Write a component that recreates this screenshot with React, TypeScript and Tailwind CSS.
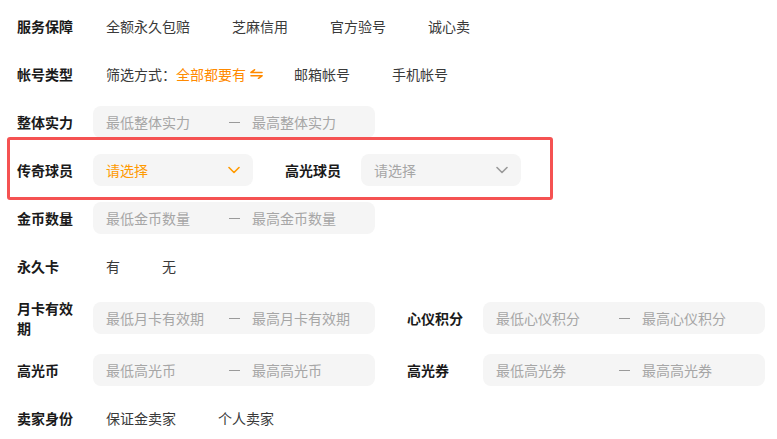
import React from "react";

const Label = ({ children }: { children: React.ReactNode }) => (
  <div className="w-[76px] shrink-0 pr-[12px] text-[14px] leading-[20px] font-bold text-[#1a1a1a]">{children}</div>
);

const Options = ({ items }: { items: string[] }) => (
  <div className="flex items-center gap-[42px] pl-[13px] text-[14px] leading-[20px] text-[#3a3a3a]">
    {items.map((t) => (
      <span key={t}>{t}</span>
    ))}
  </div>
);

const Range = ({ a, b }: { a: string; b: string }) => (
  <div className="w-[282px] h-[32px] rounded-[8px] bg-[#f5f5f5] flex items-center text-[14px] leading-[20px] text-[#a6a6a6]">
    <span className="w-[136px] pl-[13px] shrink-0">{a}</span>
    <span className="w-[11px] h-[1px] bg-[#9a9a9a] shrink-0"></span>
    <span className="pl-[12px]">{b}</span>
  </div>
);

const Chevron = ({ color }: { color: string }) => (
  <svg width="12" height="8" viewBox="0 0 12 8" fill="none">
    <polyline points="1,1.5 6,6.5 11,1.5" stroke={color} strokeWidth="1.6" strokeLinecap="round" strokeLinejoin="round" />
  </svg>
);

const Select = ({ active }: { active?: boolean }) => (
  <div className="w-[160px] h-[32px] rounded-[8px] bg-[#f5f5f5] flex items-center justify-between pl-[13px] pr-[13px] text-[14px] leading-[20px]">
    <span className={active ? "text-[#ff9a00]" : "text-[#a6a6a6]"}>请选择</span>
    <Chevron color={active ? "#ff9a00" : "#999999"} />
  </div>
);

const Row = ({ children, extra }: { children: React.ReactNode; extra?: string }) => (
  <div className={"flex items-center min-h-[32px] " + (extra ?? "")}>{children}</div>
);

export default function App() {
  return (
    <div className="w-[777px] h-[439px] bg-white overflow-hidden pt-[10px] pl-[17px] flex flex-col gap-4 font-['Noto_Sans_CJK_SC',sans-serif]">
      <Row>
        <Label>服务保障</Label>
        <Options items={["全额永久包赔", "芝麻信用", "官方验号", "诚心卖"]} />
      </Row>
      <Row>
        <Label>帐号类型</Label>
        <div className="flex items-center pl-[13px] text-[14px] leading-[20px] text-[#3a3a3a]">
          <span>筛选方式：</span>
          <span className="text-[#ff8a00]">全部都要有</span>
          <svg className="ml-[4px]" width="13" height="10" viewBox="0 0 13 10" fill="none">
            <path d="M1 3.5 H12 M1 3.5 L4.5 0.8" stroke="#ff8a00" strokeWidth="1.6" strokeLinecap="round" />
            <path d="M1 6.8 H12 M12 6.8 L8.5 9.4" stroke="#ff8a00" strokeWidth="1.6" strokeLinecap="round" />
          </svg>
          <span className="ml-[31px]">邮箱帐号</span>
          <span className="ml-[42px]">手机帐号</span>
        </div>
      </Row>
      <Row>
        <Label>整体实力</Label>
        <Range a="最低整体实力" b="最高整体实力" />
      </Row>
      <Row extra="relative">
        <Label>传奇球员</Label>
        <Select active />
        <div className="ml-[32px] flex items-center">
          <Label>高光球员</Label>
          <Select />
        </div>
        <div className="absolute left-[-10px] top-[-17px] w-[546px] h-[63px] border-[3px] border-[#f55252] rounded-[3px] pointer-events-none"></div>
      </Row>
      <Row>
        <Label>金币数量</Label>
        <Range a="最低金币数量" b="最高金币数量" />
      </Row>
      <Row>
        <Label>永久卡</Label>
        <Options items={["有", "无"]} />
      </Row>
      <Row>
        <Label>月卡有效期</Label>
        <Range a="最低月卡有效期" b="最高月卡有效期" />
        <div className="ml-[32px] flex items-center">
          <Label>心仪积分</Label>
          <Range a="最低心仪积分" b="最高心仪积分" />
        </div>
      </Row>
      <Row>
        <Label>高光币</Label>
        <Range a="最低高光币" b="最高高光币" />
        <div className="ml-[32px] flex items-center">
          <Label>高光券</Label>
          <Range a="最低高光券" b="最高高光券" />
        </div>
      </Row>
      <Row>
        <Label>卖家身份</Label>
        <Options items={["保证金卖家", "个人卖家"]} />
      </Row>
    </div>
  );
}
